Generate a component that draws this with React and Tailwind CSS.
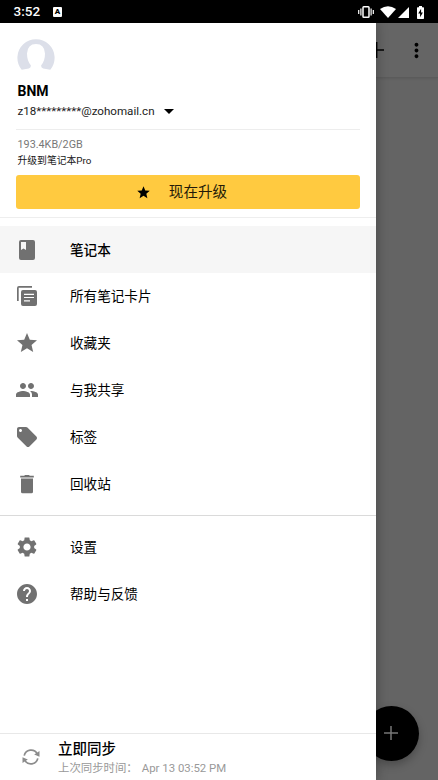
import React from 'react';
import { MdStar, MdPeople, MdLocalOffer, MdDelete, MdSettings, MdHelp, MdMoreVert } from 'react-icons/md';

const BookIcon = ({ className }) => (
    <svg viewBox="0 0 24 24" fill="currentColor" className={className}>
        <path fillRule="evenodd" d="M6 2h12a2 2 0 0 1 2 2v16a2 2 0 0 1-2 2H6a2 2 0 0 1-2-2V4a2 2 0 0 1 2-2zM6 4v8l2.5-1.6L11 12V4z" />
    </svg>
);

const CardsIcon = ({ className }) => (
    <svg viewBox="0 0 24 24" fill="currentColor" className={className}>
        <path d="M2 17V4a2 2 0 0 1 2-2h13v1.7H3.7V17z" />
        <path fillRule="evenodd" d="M8 6h12a2 2 0 0 1 2 2v12a2 2 0 0 1-2 2H8a2 2 0 0 1-2-2V8a2 2 0 0 1 2-2zM9 9.7v1.2h10V9.7zM9 12.9v1.2h10v-1.2zM9 16.2v1.2h6v-1.2z" />
    </svg>
);

const TrashIcon = ({ className }) => (
    <svg viewBox="0 0 24 24" fill="currentColor" className={className}>
        <path d="M6 6.5h12v13.3a1.5 1.5 0 0 1-1.5 1.5h-9A1.5 1.5 0 0 1 6 19.800zM5.200 3.800h4L10 3h4l.8.8h4v1.700H5.200z" />
    </svg>
);

const SyncIcon = () => (
    <svg viewBox="0 0 18 18" className="h-[18px] w-[18px] text-[#8c8c8c]" fill="none" stroke="currentColor" strokeWidth="1.7">
        <path d="M2.2 7.6A7 7 0 0 1 15.2 5.8" />
        <path d="M15.8 10.4A7 7 0 0 1 2.8 12.2" />
        <path d="M17.5 3v5.700l-5.300-2.200z" fill="currentColor" stroke="none" />
        <path d="M.5 15V9.300l5.300 2.200z" fill="currentColor" stroke="none" />
    </svg>
);

const mainItems = [
    { label: '笔记本', icon: BookIcon, active: true },
    { label: '所有笔记卡片', icon: CardsIcon },
    { label: '收藏夹', icon: MdStar },
    { label: '与我共享', icon: MdPeople },
    { label: '标签', icon: MdLocalOffer },
    { label: '回收站', icon: TrashIcon },
];

const otherItems = [
    { label: '设置', icon: MdSettings },
    { label: '帮助与反馈', icon: MdHelp },
];

function MenuItem({ label, icon: Icon, active }) {
    return (
        <li className={active ? 'flex h-[47px] items-center bg-[#f6f6f6] pl-[15px] font-medium' : 'flex h-[46.8px] items-center pl-[15px]'}>
            <Icon className="h-6 w-6 shrink-0 text-[#717171]" />
            <span className="ml-[31px] text-[13.6px] leading-5 text-black">{label}</span>
        </li>
    );
}

function StatusBar() {
    return (
        <div className="flex h-[23px] shrink-0 items-center bg-black pl-[13.5px] pr-[14px] pt-px text-white">
            <span className="text-[13.5px] font-medium leading-none">3:52</span>
            <span className="ml-[13px] flex h-[10px] w-[9px] items-center justify-center rounded-[1px] bg-white text-[8px] font-black leading-none text-black">A</span>
            <div className="ml-auto flex items-center">
                {/* vibrate */}
                <svg viewBox="0 0 16 12" className="h-3 w-4" fill="none" stroke="#fff" strokeWidth="1.2">
                    <rect x="5" y=".8" width="6" height="10.4" rx=".8" strokeWidth="1.5" />
                    <path d="M.7 4v4M2.9 2.5v7M13.1 2.5v7M15.3 4v4" />
                </svg>
                {/* wifi */}
                <svg viewBox="0 0 16 12" className="ml-[6px] h-3 w-4" fill="#fff">
                    <path d="M0 3Q8-2.6 16 3L8 12z" />
                </svg>
                {/* signal */}
                <svg viewBox="0 0 11 11" className="ml-[2px] h-[11px] w-[11px]" fill="#fff">
                    <path d="M11 0v11H0z" />
                </svg>
                {/* battery */}
                <svg viewBox="0 0 7 13" className="ml-[8px] h-[13px] w-[7px]">
                    <path d="M2 0h3v1.2h1.3q.7 0 .7.7v10.4q0 .7-.7.7H.7q-.7 0-.7-.7V1.9q0-.7.7-.7H2z" fill="#fff" />
                    <path d="M4.1 2.8 1.2 7.5h1.9v3.7l2.8-4.800H4.1z" fill="#000" />
                </svg>
            </div>
        </div>
    );
}

function Account() {
    return (
        <div className="flex h-[195px] shrink-0 flex-col border-b border-[#eeeeee] px-4">
            <svg viewBox="0 0 38 38" className="mt-4 ml-[1px] h-[38px] w-[38px] shrink-0">
                <path d="M4.7 30.8A18.6 18.6 0 1 1 33.3 30.8L26.2 29.4Q23.8 28.7 24.2 26.2Q28 22 28 14.5Q27.5 5 19 5Q10.5 5 10 14.5Q10 22 13.8 26.2Q14.2 28.7 11.8 29.4z" fill="#dcdfe9" />
            </svg>
            <div className="mt-[5px] ml-[1.5px] h-[18px] text-[14px] font-bold leading-[18px] text-black">BNM</div>
            <div className="mt-[3px] ml-[1.5px] flex h-4 items-center text-[11.6px] leading-4 text-[#1c1c1c]">
                <span>z18*********@zohomail.cn</span>
                <svg viewBox="0 0 10 5" className="ml-[9.5px] h-[5px] w-[10px]" fill="#000">
                    <path d="M0 0h10L5 5z" />
                </svg>
            </div>
            <div className="mt-[10px] border-t border-[#ededed]" />
            <div className="mt-[8px] ml-[1.5px] h-[14px] text-[10.8px] leading-[14px] text-[#777777]">193.4KB/2GB</div>
            <div className="mt-[1px] ml-[1.5px] h-[15px] text-[9.8px] leading-[15px] text-[#161616]">升级到笔记本Pro</div>
            <button className="mt-[7px] flex h-[34px] w-full shrink-0 items-center justify-center rounded-[3px] bg-[#ffca40] pr-[13px] text-[14.6px] leading-5 text-[#241a08]">
                <MdStar className="mr-[18px] h-[15px] w-[15px] text-black" />
                现在升级
            </button>
        </div>
    );
}

function Drawer() {
    return (
        <aside className="z-10 flex w-[376px] shrink-0 flex-col bg-white shadow-[2px_0_10px_rgba(0,0,0,0.22)]">
            <Account />
            <ul className="mt-[8px]">
                {mainItems.map(item => <MenuItem key={item.label} {...item} />)}
            </ul>
            <div className="mt-[8px] border-t border-[#dadada]" />
            <ul className="mt-[8px]">
                {otherItems.map(item => <MenuItem key={item.label} {...item} />)}
            </ul>
            <div className="mt-auto flex h-[47px] shrink-0 items-center border-t border-[#e8e8e8] pl-[22px]">
                <SyncIcon />
                <div className="ml-[18px] pt-[3px]">
                    <div className="text-[14.5px] font-medium leading-[18px] text-black">立即同步</div>
                    <div className="text-[11.4px] leading-[18px] whitespace-pre text-[#999999]">上次同步时间：<span className="ml-[4px]">Apr 13 03:52 PM</span></div>
                </div>
            </div>
        </aside>
    );
}

export default function App() {
    return (
        <div className="flex h-[780px] w-[438px] flex-col overflow-hidden bg-[#646464] font-['Roboto','Noto_Sans_CJK_SC',sans-serif]">
            <StatusBar />
            <div className="relative flex min-h-0 flex-1">
                <Drawer />
                {/* notebook list dimmed behind the drawer */}
                <main className="flex-1 bg-[#646464]">
                    <header className="flex h-[55px] items-center border-b border-[#5b5b5b] bg-[#656565] shadow-[0_1px_2px_rgba(0,0,0,0.08)]">
                        <svg viewBox="0 0 16 16" className="-ml-[8px] h-4 w-4" stroke="#000" strokeWidth="1.6">
                            <path d="M8.6 0v16M0 8h16" />
                        </svg>
                        <MdMoreVert className="ml-[20.5px] mt-px h-[23px] w-[23px] text-black" />
                    </header>
                </main>
                <button className="absolute top-[682.5px] left-[363.5px] flex h-[55px] w-[55px] items-center justify-center rounded-full bg-black shadow-[0_4px_8px_rgba(0,0,0,0.25)]">
                    <svg viewBox="0 0 14 14" className="h-[14px] w-[14px]" stroke="#777777" strokeWidth="1.5">
                        <path d="M7 0v14M0 7h14" />
                    </svg>
                </button>
            </div>
        </div>
    );
}
